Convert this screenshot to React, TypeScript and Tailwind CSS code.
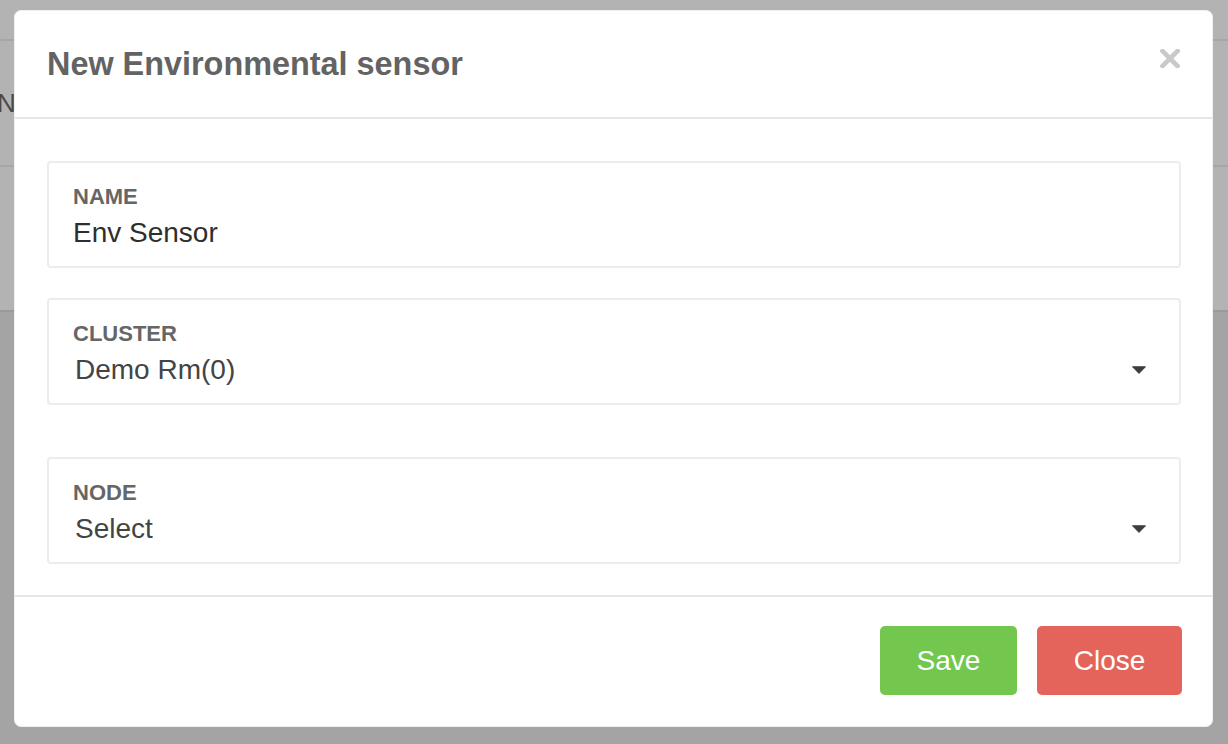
import React from "react";

function Caret() {
  return (
    <svg width="14" height="8" viewBox="0 0 14 8" className="mr-[9px] shrink-0">
      <path d="M0.5 0.8 L13.5 0.8 L7 7.4 Z" fill="#3d3d3d" stroke="#3d3d3d" strokeWidth="1" strokeLinejoin="round" />
    </svg>
  );
}

function Field({ label, value, select }: { label: string; value: string; select?: boolean }) {
  return (
    <div className="h-[107px] rounded-[4px] border-2 border-[#ececec] px-[24px] pt-[21px] flex flex-col">
      <div className="text-[22px] leading-[25px] font-bold text-[#666666]">{label}</div>
      <div className="mt-[8px] flex items-center justify-between">
        <span
          className={
            select
              ? "ml-[2px] text-[28px] leading-[32px] text-[#444444]"
              : "text-[28px] leading-[32px] text-[#2e2e2e]"
          }
        >
          {value}
        </span>
        {select && <Caret />}
      </div>
    </div>
  );
}

export default function App() {
  return (
    <div
      className="relative w-[1228px] h-[744px] overflow-hidden bg-[#a4a4a4]"
      style={{ fontFamily: '"Liberation Sans", Arial, sans-serif' }}
    >
      {/* dimmed page behind the modal */}
      <div className="h-[312px] bg-[#b3b3b3] border-b-2 border-[#9a9a9a] flex flex-col">
        <div className="h-[41px] border-b-2 border-[#a6a6a6]" />
        <div className="h-[126px] border-b-2 border-[#a6a6a6] flex items-center">
          <span className="-ml-[3px] text-[26px] text-[#4a4a4a] tracking-[1px]">ND</span>
        </div>
      </div>

      {/* modal */}
      <div className="absolute left-[14px] top-[10px] w-[1199px] h-[717px] bg-white rounded-[7px] border border-[#edf0f0] flex flex-col">
        <div className="relative h-[108px] border-b-2 border-[#e6e6e6] px-[32px] pt-[36px]">
          <h1 className="text-[32.4px] leading-[35px] font-bold text-[#636363]">New Environmental sensor</h1>
          <svg
            width="20"
            height="19"
            viewBox="0 0 20 19"
            className="absolute right-[32px] top-[38px]"
          >
            <path d="M2.5 2 L17.5 17 M17.5 2 L2.5 17" stroke="#c9c9c9" strokeWidth="4.6" strokeLinecap="square" />
          </svg>
        </div>

        <div className="pl-[32px] pr-[31px] pt-[42px] pb-[31px] flex flex-col border-b-2 border-[#e6e6e6]">
          <Field label="NAME" value="Env Sensor" />
          <div className="mt-[30px]">
            <Field label="CLUSTER" value="Demo Rm(0)" select />
          </div>
          <div className="mt-[52px]">
            <Field label="NODE" value="Select" select />
          </div>
        </div>

        <div className="flex justify-end gap-[20px] px-[30px] pt-[29px]">
          <button className="h-[69px] w-[137px] rounded-[5px] bg-[#73c74f] text-white text-[28px] leading-none">
            Save
          </button>
          <button className="h-[69px] w-[145px] rounded-[5px] bg-[#e4645b] text-white text-[28px] leading-none">
            Close
          </button>
        </div>
      </div>
    </div>
  );
}
